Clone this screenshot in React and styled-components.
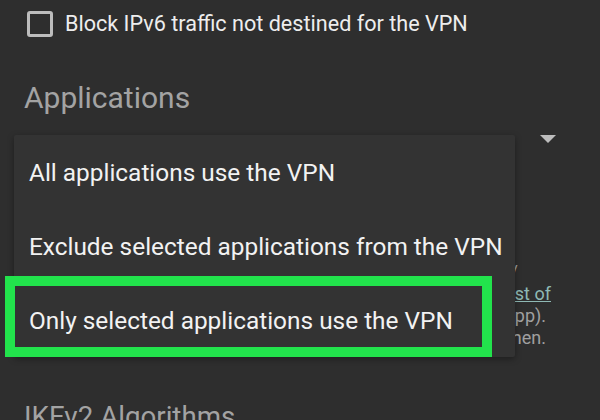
import { styled, createGlobalStyle } from "styled-components";

const Global = createGlobalStyle`
  html, body {
    margin: 0;
    background: #2e2e2e;
    font-family: Roboto, "Liberation Sans", sans-serif;
  }
`;

export default function App() {
  return (
    <Screen>
      <Global />
      <CheckRow>
        <Box />
        <CheckLabel>Block IPv6 traffic not destined for the VPN</CheckLabel>
      </CheckRow>

      <SectionTitle>Applications</SectionTitle>

      <SelectRow>
        <SelectValue>All applications use the VPN</SelectValue>
        <Arrow />
      </SelectRow>

      <Desc>
        <DescLine $inset={33}>Apps selected here are excluded /</DescLine>
        <DescLine $inset={0}>
          only use the VPN (<Link>list of</Link>
        </DescLine>
        <DescLine $inset={5}>apps in the app).</DescLine>
        <DescLine $inset={5}>Reconnect then.</DescLine>
      </Desc>

      <SectionTitle $top={51} $size={27.7}>IKEv2 Algorithms</SectionTitle>

      <Menu>
        <MenuItem>All applications use the VPN</MenuItem>
        <MenuItem>Exclude selected applications from the VPN</MenuItem>
        <MenuItem>Only selected applications use the VPN</MenuItem>
      </Menu>

      <Highlight />
    </Screen>
  );
}

const Screen = styled.div`
  position: relative;
  width: 600px;
  height: 420px;
  overflow: hidden;
  background: #2e2e2e;
  padding: 0 0 0 24px;
  box-sizing: border-box;
`;

const CheckRow = styled.div`
  display: flex;
  align-items: center;
  height: 47px;
  padding-left: 3px;
  gap: 12px;
`;

const Box = styled.div`
  width: 26px;
  height: 26px;
  box-sizing: border-box;
  border: 3px solid #bdbdbd;
  border-radius: 3px;
`;

const CheckLabel = styled.div`
  color: #ededed;
  font-size: 21.6px;
`;

const SectionTitle = styled.div`
  margin-top: ${(p) => p.$top ?? 34}px;
  color: #a3a3a3;
  font-size: ${(p) => p.$size ?? 30}px;
  line-height: 34px;
`;

const SelectRow = styled.div`
  display: flex;
  align-items: center;
  justify-content: space-between;
  width: 532px;
  height: 50px;
  margin-top: 4px;
`;

const SelectValue = styled.div`
  color: #e6e6e6;
  font-size: 22px;
  padding-left: 5px;
`;

const Arrow = styled.div`
  width: 0;
  height: 0;
  border-left: 8px solid transparent;
  border-right: 8px solid transparent;
  border-top: 8px solid #bdbdbd;
  margin-bottom: 10px;
`;

const Desc = styled.div`
  width: 527px;
  margin-top: 92px;
  color: #a0a0a0;
  font-size: 18px;
  line-height: 22px;
`;

const DescLine = styled.div`
  text-align: right;
  white-space: nowrap;
  padding-right: ${(p) => p.$inset}px;
`;

const Link = styled.span`
  color: #8fb9b5;
  text-decoration: underline;
`;

const Menu = styled.div`
  position: absolute;
  left: 14px;
  top: 135px;
  width: 501px;
  background: #333333;
  box-shadow: 0 2px 6px rgba(0, 0, 0, 0.35);
  border-radius: 2px;
`;

const MenuItem = styled.div`
  height: 74px;
  display: flex;
  align-items: center;
  padding-left: 15px;
  color: #f2f2f2;
  font-size: 24.4px;
  white-space: nowrap;
`;

const Highlight = styled.div`
  position: absolute;
  left: 5px;
  top: 276px;
  width: 487px;
  height: 81px;
  box-sizing: border-box;
  border: 10px solid #22e34c;
`;
